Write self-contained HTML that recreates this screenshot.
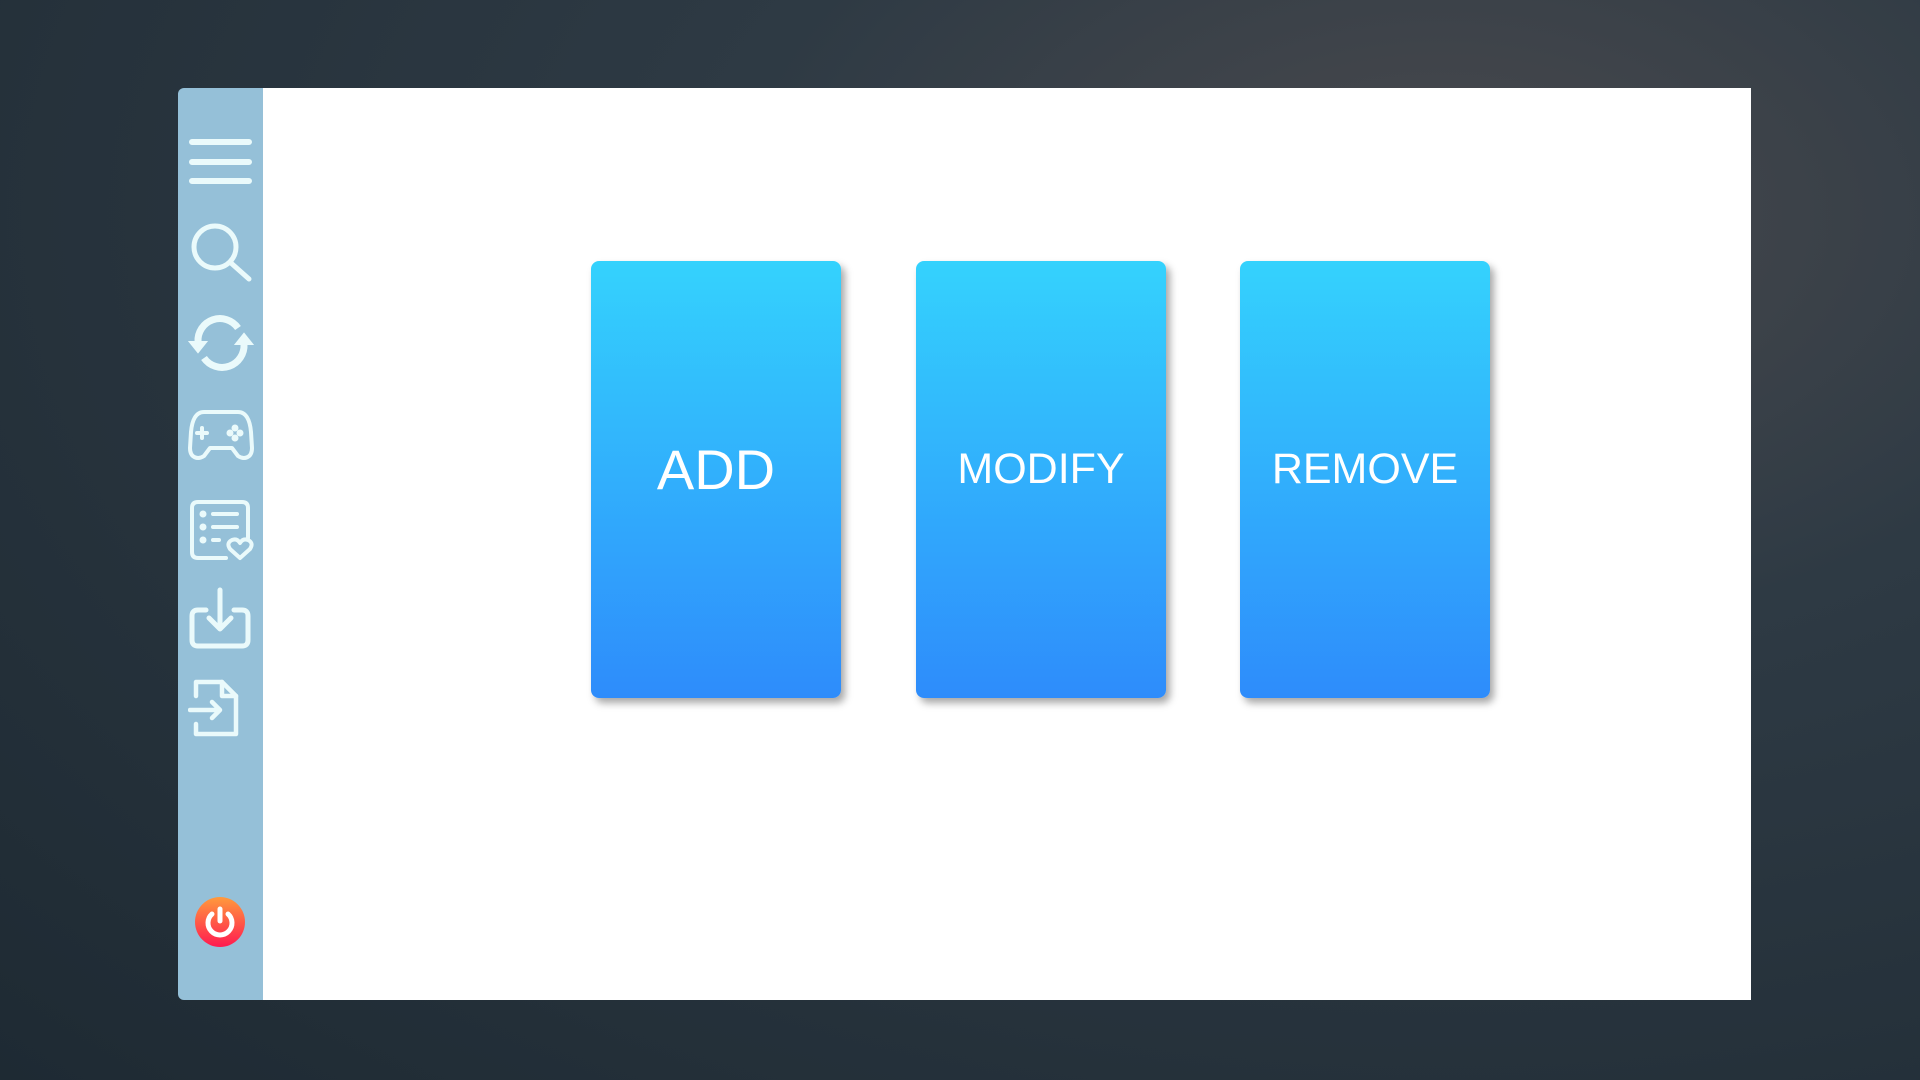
<!DOCTYPE html>
<html><head><meta charset="utf-8"><style>
html,body{margin:0;width:1920px;height:1080px;overflow:hidden}
body{background:radial-gradient(ellipse at 75% 20%,#4a4a4e 0%,#2e3a44 35%,#1e2a33 100%);position:relative;font-family:"Liberation Sans",sans-serif}
.side{position:absolute;left:178px;top:88px;width:85px;height:912px;background:#95c0d8;border-radius:6px 0 0 6px}
.main{position:absolute;left:263px;top:88px;width:1488px;height:912px;background:#fff}
.card{position:absolute;top:261px;width:250px;height:437px;border-radius:8px;background:linear-gradient(#34d2fd,#2e8cfb);box-shadow:4px 5px 8px rgba(0,0,0,.35);color:#fff;display:flex;align-items:center;justify-content:center;font-size:43px;padding-bottom:20px;box-sizing:border-box}
svg.i{position:absolute;left:188px}
.pw{position:absolute;left:195px;top:897px;width:50px;height:50px;border-radius:50%;background:linear-gradient(#ff9a3c,#ff1a50)}
</style></head><body>
<div class="side"></div>
<div class="main"></div>
<div class="card" style="left:591px;font-size:56px">ADD</div>
<div class="card" style="left:916px">MODIFY</div>
<div class="card" style="left:1240px">REMOVE</div>
<svg class="i" style="top:128px" width="66" height="66" viewBox="0 0 66 66" fill="none" stroke="#eafafb" stroke-width="6" stroke-linecap="round"><path d="M4 14H61M4 34H61M4 53H61"/></svg>
<svg class="i" style="top:220px" width="66" height="66" viewBox="0 0 66 66" fill="none" stroke="#eafafb" stroke-width="5" stroke-linecap="round"><circle cx="27" cy="27" r="21"/><path d="M43 43L61 59"/></svg>
<svg class="i" style="top:312px" width="66" height="62" viewBox="0 0 66 62" fill="none" stroke="#eafafb" stroke-width="7"><path d="M10 30A22 22 0 0 1 50 16"/><path d="M56 32A22 22 0 0 1 16 46"/><path d="M2 30H18L10 40Z" fill="#eafafb" stroke-width="2"/><path d="M64 32H48L56 22Z" fill="#eafafb" stroke-width="2"/></svg>
<svg class="i" style="top:408px" width="66" height="56" viewBox="0 0 66 56" fill="none" stroke="#eafafb" stroke-width="4" stroke-linejoin="round" stroke-linecap="round"><path d="M16 4H50C58 4 62 12 63 24L64 40C64 50 56 52 50 48L44 40H22L16 48C10 52 2 50 2 40L3 24C4 12 8 4 16 4Z"/><path d="M14 20V30M9 25H19"/><circle cx="47" cy="20" r="1.5" fill="#eafafb"/><circle cx="47" cy="30" r="1.5" fill="#eafafb"/><circle cx="42" cy="25" r="1.5" fill="#eafafb"/><circle cx="52" cy="25" r="1.5" fill="#eafafb"/></svg>
<svg class="i" style="top:498px" width="66" height="66" viewBox="0 0 66 66" fill="none" stroke="#eafafb" stroke-width="4" stroke-linecap="round" stroke-linejoin="round"><path d="M38 60H10Q4 60 4 54V10Q4 4 10 4H54Q60 4 60 10V40"/><circle cx="15" cy="16" r="1.5" fill="#eafafb"/><circle cx="15" cy="29" r="1.5" fill="#eafafb"/><circle cx="15" cy="42" r="1.5" fill="#eafafb"/><path d="M25 16H49M25 29H49M25 42H31"/><path d="M52 60L42 51Q38 45 44 42Q49 40 52 45Q55 40 60 42Q66 45 62 51Z"/></svg>
<svg class="i" style="top:586px" width="66" height="66" viewBox="0 0 66 66" fill="none" stroke="#eafafb" stroke-width="5" stroke-linecap="round" stroke-linejoin="round"><path d="M18 24H10Q4 24 4 30V54Q4 60 10 60H54Q60 60 60 54V30Q60 24 54 24H46"/><path d="M32 4V42M21 32L32 43L43 32"/></svg>
<svg class="i" style="top:676px" width="66" height="66" viewBox="0 0 66 66" fill="none" stroke="#eafafb" stroke-width="4.5" stroke-linecap="round" stroke-linejoin="round"><path d="M8 20V6H34L48 20V58H8V48"/><path d="M34 6V20H48"/><path d="M2 34H32M24 26L32 34L24 42"/></svg>
<div class="pw"><svg width="50" height="50" viewBox="0 0 50 50" fill="none" stroke="#fff" stroke-width="5" stroke-linecap="round"><path d="M17 17A12 12 0 1 0 33 17"/><path d="M25 12V24"/></svg></div>
</body></html>
